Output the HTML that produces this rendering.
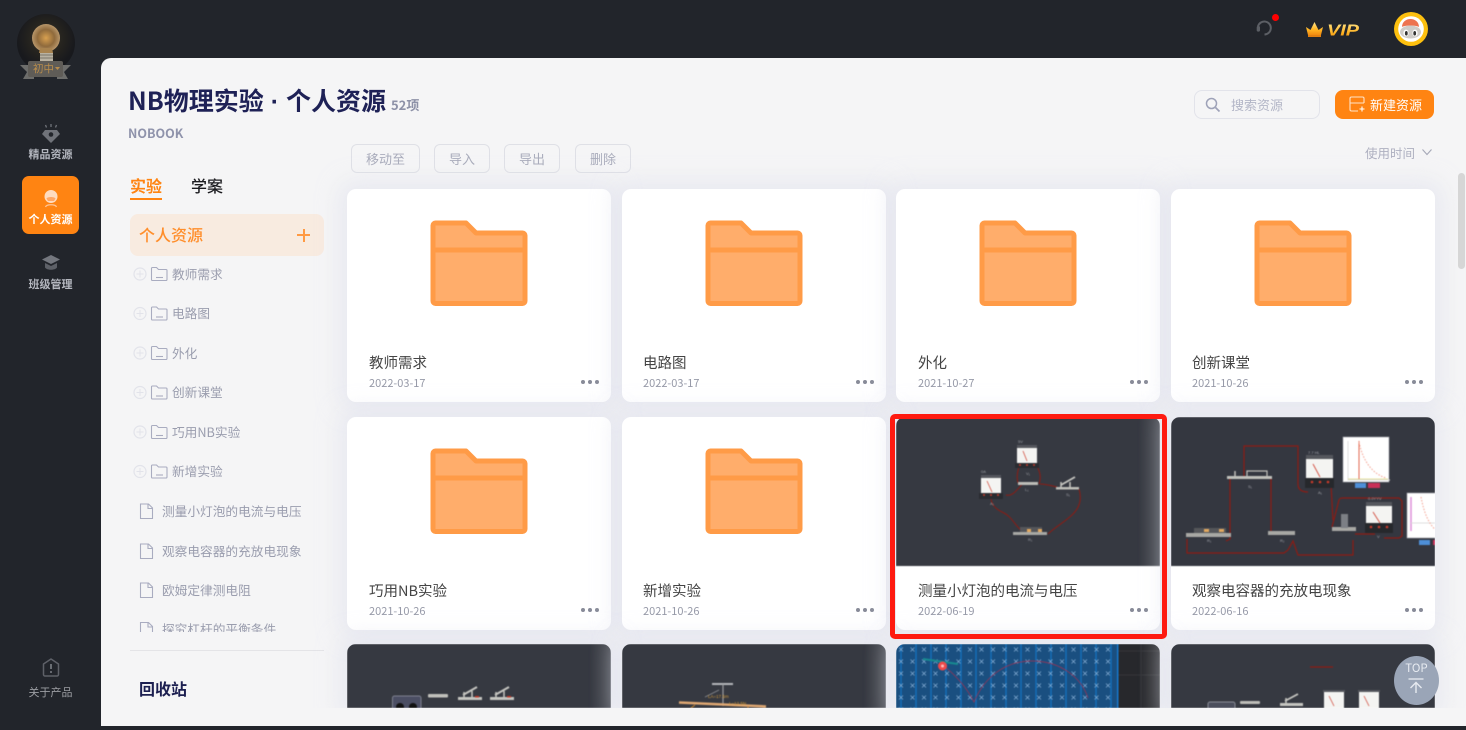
<!DOCTYPE html>
<html lang="zh"><head><meta charset="utf-8"><title>NB物理实验</title>
<style>
*{box-sizing:border-box}
html,body{margin:0;padding:0;width:1466px;height:730px;overflow:hidden;background:#22252b;font-family:"Noto Sans CJK SC","Liberation Sans",sans-serif}
.t{position:absolute;white-space:nowrap;line-height:20px;height:20px}
.a{position:absolute}
#main{position:absolute;left:101px;top:58px;width:1365px;height:668px;background:#f5f5f6;border-top-left-radius:10px;overflow:hidden}
#grid{position:absolute;left:-101px;top:-58px;width:1466px;height:708px;overflow:hidden}
.card{position:absolute;width:264px;height:213px;background:#fff;border-radius:9px;overflow:hidden;box-shadow:0 0 22px 8px rgba(222,224,236,.55)}
.card.r3{height:64px;border-radius:9px 9px 0 0}
.card svg{position:absolute;left:0;top:0}
.card svg.th{filter:blur(.45px)}
.ct{position:absolute;left:22px;top:164px;font-size:14.5px;line-height:20px;color:#444;white-space:nowrap}
.cd{position:absolute;left:22px;top:186px;font-size:11px;line-height:16px;color:#979aa8;white-space:nowrap}
.l2 .ct,.l2 .cd{left:21px}
.dots{position:absolute;left:234px;top:191px;width:18px;height:4px}
.dots i{position:absolute;top:0;width:4px;height:4px;border-radius:50%;background:#888b98}
.dots i:nth-child(1){left:0}.dots i:nth-child(2){left:7px}.dots i:nth-child(3){left:14px}
.sheen{position:absolute;right:0;top:0;width:22px;height:149px;background:linear-gradient(90deg,rgba(255,255,255,0),rgba(255,255,255,.11))}
.r3 .sheen{height:64px}
.btn{position:absolute;top:144px;height:29px;border:1px solid #dfe0e6;border-radius:6px;font-size:13px;line-height:27px;text-align:center;color:#a9acbb}
.tree{font-size:12.7px;color:#9a9dae}
.nav{font-size:11px;font-weight:700;color:#b4b7bf;width:101px;left:0;text-align:center}
</style></head><body>

<!-- sidebar -->
<svg class="a" style="left:10px;top:10px" width="72" height="76" viewBox="0 0 72 76">
<defs><radialGradient id="gl" cx=".5" cy=".42" r=".5"><stop offset="0" stop-color="#4a3c2a"/><stop offset=".55" stop-color="#26241f"/><stop offset="1" stop-color="#18191d"/></radialGradient>
<radialGradient id="bb" cx=".5" cy=".5" r=".55"><stop offset="0" stop-color="#d8a050"/><stop offset=".55" stop-color="#8f6a3c"/><stop offset="1" stop-color="#c2a277"/></radialGradient></defs>
<circle cx="36" cy="33" r="29" fill="url(#gl)"/>
<circle cx="36" cy="28" r="14" fill="url(#bb)"/>
<path d="M30 38h12l1 5H29z" fill="#a8834f"/>
<rect x="30" y="43" width="13" height="8" fill="#b9b2a2"/><path d="M30 45h13M30 48h13" stroke="#7b7569"/>
<path d="M10 55h14v14H13l4-7z" fill="#6d6d6b"/><path d="M61 55H47v14h11l-4-7z" fill="#6d6d6b"/>
<rect x="18" y="51" width="35" height="16" rx="2" fill="#5f5c57"/>
<path d="M45 57h5l-2.500 3z" fill="#b98d4c"/>
<text x="23" y="62" font-size="10.500" fill="#b98d4c" font-family="Noto Sans CJK SC,sans-serif">初中</text>
</svg>

<svg class="a" style="left:40px;top:122px" width="22" height="22" viewBox="0 0 22 22">
<path d="M5 8h12l3 4-9 9-9-9z" fill="#70737a"/><circle cx="11" cy="12.500" r="2.300" fill="#22252b"/>
<path d="M11 2v3M5.500 3l1 2.500M16.500 3l-1 2.500" stroke="#70737a" stroke-width="1.300"/></svg>
<div class="t nav" style="top:144px">精品资源</div>
<div class="a" style="left:22px;top:176px;width:57px;height:58px;border-radius:7px;background:#ff8412"></div>
<svg class="a" style="left:40px;top:188px" width="22" height="22" viewBox="0 0 22 22">
<circle cx="11" cy="8.500" r="6.500" fill="#ffdcc0"/><path d="M6.500 10.500c1-2 8-2 9 0l-1.500 2.500h-6z" fill="#ffa868"/><path d="M5.500 19c1-3 10-3 11 0" fill="none" stroke="#ffc596" stroke-width="1.300"/></svg>
<div class="t nav" style="top:209px;color:#fff">个人资源</div>
<svg class="a" style="left:40px;top:253px" width="22" height="20" viewBox="0 0 22 20">
<path d="M11 2l9 4.500-9 4.500-9-4.500z" fill="#74777e"/><path d="M5 10v4.500c2 3 10 3 12 0V10l-6 3z" fill="#5d6067"/></svg>
<div class="t nav" style="top:274px">班级管理</div>
<svg class="a" style="left:41px;top:657px" width="20" height="21" viewBox="0 0 20 21">
<path d="M10 2l7.500 5v10.500a1.500 1.500 0 0 1-1.500 1.500H4a1.500 1.500 0 0 1-1.500-1.500V7z" fill="none" stroke="#5e6168" stroke-width="1.500" stroke-linejoin="round"/>
<path d="M10 7v5" stroke="#7d8087" stroke-width="1.600"/><circle cx="10" cy="15" r="1" fill="#7d8087"/></svg>
<div class="t" style="left:0;width:101px;text-align:center;top:682px;font-size:11px;color:#9c9ea3">关于产品</div>

<!-- top bar -->
<svg class="a" style="left:1254px;top:17px" width="20" height="21" viewBox="0 0 20 21">
<path d="M4 9.500A6.500 6.500 0 1 1 10.500 17.500" fill="none" stroke="#5c5f65" stroke-width="2"/><rect x="2.700" y="9" width="3.300" height="5.600" rx="1.500" fill="#5c5f65"/></svg>
<div class="a" style="left:1272px;top:14px;width:7px;height:7px;border-radius:50%;background:#f00"></div>
<svg class="a" style="left:1304px;top:20px" width="58" height="18" viewBox="0 0 58 18">
<defs><linearGradient id="cr" x1="0" y1="0" x2="0" y2="1"><stop offset="0" stop-color="#ffe48a"/><stop offset=".6" stop-color="#ffb321"/><stop offset="1" stop-color="#f08a10"/></linearGradient></defs>
<path d="M2 7l4.500 3L10.500 2l4 8L19 7l-2 8H4z" fill="url(#cr)"/><rect x="4" y="15" width="13" height="2" fill="#e07f10"/>
<text x="23" y="15.500" font-size="15.500" font-weight="700" font-style="italic" fill="url(#cr)" font-family="Liberation Sans,sans-serif" textLength="32" lengthAdjust="spacingAndGlyphs">VIP</text></svg>
<svg class="a" style="left:1394px;top:12px" width="34" height="34" viewBox="0 0 34 34">
<circle cx="17" cy="17" r="17" fill="#fdc00f"/><circle cx="17" cy="17" r="12.800" fill="#fff"/>
<ellipse cx="16.500" cy="20" rx="10.500" ry="6.500" fill="#cfccc8"/>
<path d="M8 15c0-5 4-8 8.500-8S25 10 25 15c-3-2-14-2-17 0z" fill="#ed7350"/>
<ellipse cx="12" cy="21" rx="2.600" ry="3.400" fill="#fff"/><ellipse cx="21" cy="21" rx="2.600" ry="3.400" fill="#fff"/>
<ellipse cx="12.300" cy="21.300" rx="1.400" ry="2.300" fill="#333"/><ellipse cx="20.700" cy="21.300" rx="1.400" ry="2.300" fill="#333"/></svg>

<!-- main -->
<div id="main">
<div id="grid">

<div class="t" style="left:128px;top:85px;height:30px;line-height:30px;font-size:25px;font-weight:700;color:#1e2156">NB物理实验<span style="font-family:'Liberation Sans',sans-serif"> · </span>个人资源</div>
<div class="t" style="left:391px;top:95px;font-size:13px;font-weight:700;color:#8e92a8">52项</div>
<div class="t" style="left:128px;top:123px;font-size:12.500px;font-weight:700;color:#8f93ab">NOBOOK</div>

<!-- tabs -->
<div class="t" style="left:130px;top:175px;font-size:16px;font-weight:700;color:#ff8412">实验</div>
<div class="a" style="left:130px;top:198px;width:32px;height:2px;background:#ff8412"></div>
<div class="t" style="left:191px;top:175px;font-size:16px;font-weight:500;color:#1b1b1f">学案</div>
<div class="a" style="left:130px;top:214px;width:194px;height:42px;border-radius:8px;background:#f8ebe0"></div>
<div class="t" style="left:139px;top:224px;font-size:16px;font-weight:500;color:#ff8e2b">个人资源</div>
<div class="a" style="left:297px;top:234px;width:13px;height:2px;background:#ff9a44"></div>
<div class="a" style="left:302.500px;top:229px;width:2px;height:13px;background:#ff9a44"></div>

<!-- tree -->
<div class="a" style="left:130px;top:256px;width:194px;height:376px;overflow:hidden">
<svg class="a" style="left:0;top:0" width="50" height="240" viewBox="0 0 50 240" fill="none">
<defs><g id="fo"><circle cx="10" cy="18" r="6" stroke="#e2e3ea" stroke-width="1.200"/><path d="M6.500 18h7M10 14.500v7" stroke="#e2e3ea" stroke-width="1"/><path d="M21.500 23.500v-11a1 1 0 0 1 1-1h4l2 2h7.500a1 1 0 0 1 1 1v9a1 1 0 0 1-1 1h-13.500a1 1 0 0 1-1-1z" stroke="#a9acc0" stroke-width="1.100"/><path d="M26 21.500h7" stroke="#a9acc0" stroke-width="1.100"/></g></defs>
<use href="#fo"/><use href="#fo" y="39.500"/><use href="#fo" y="79"/><use href="#fo" y="118.500"/><use href="#fo" y="158"/><use href="#fo" y="197.500"/>
</svg>
<svg class="a" style="left:0;top:240px" width="30" height="136" viewBox="0 0 30 136" fill="none">
<defs><path id="fi" d="M10.500 8h8l4 4v10.500h-12zM18 8v4.500h4.500" stroke="#a9acc0" stroke-width="1.100"/></defs>
<use href="#fi"/><use href="#fi" y="40"/><use href="#fi" y="79"/><use href="#fi" y="118.500"/>
</svg>
<div class="t tree" style="left:42px;top:8px">教师需求</div>
<div class="t tree" style="left:42px;top:47px">电路图</div>
<div class="t tree" style="left:42px;top:87px">外化</div>
<div class="t tree" style="left:42px;top:126px">创新课堂</div>
<div class="t tree" style="left:42px;top:166px">巧用NB实验</div>
<div class="t tree" style="left:42px;top:205px">新增实验</div>
<div class="t tree" style="left:32px;top:245px">测量小灯泡的电流与电压</div>
<div class="t tree" style="left:32px;top:285px">观察电容器的充放电现象</div>
<div class="t tree" style="left:32px;top:324px">欧姆定律测电阻</div>
<div class="t tree" style="left:32px;top:356px;height:20px;overflow:hidden;line-height:34px">探究杠杆的平衡条件</div>
</div>
<div class="a" style="left:130px;top:650px;width:194px;height:1px;background:#e4e4e7"></div>
<div class="t" style="left:139px;top:678px;font-size:16px;font-weight:700;color:#1c1f50">回收站</div>

<!-- toolbar -->
<div class="btn" style="left:351px;width:69px">移动至</div>
<div class="btn" style="left:434px;width:56px">导入</div>
<div class="btn" style="left:504px;width:56px">导出</div>
<div class="btn" style="left:575px;width:56px">删除</div>

<div class="a" style="left:1194px;top:90px;width:126px;height:29px;border:1px solid #e2e3ea;border-radius:8px"></div>
<svg class="a" style="left:1205px;top:97px" width="16" height="16" viewBox="0 0 16 16" fill="none"><circle cx="6.500" cy="6.500" r="5" stroke="#9ea2b8" stroke-width="1.500"/><path d="M10.500 10.500l4 4" stroke="#9ea2b8" stroke-width="1.700"/></svg>
<div class="t" style="left:1231px;top:95px;font-size:13px;color:#b3b6c7">搜索资源</div>
<div class="a" style="left:1335px;top:90px;width:99px;height:29px;border-radius:8px;background:#ff8412"></div>
<svg class="a" style="left:1348px;top:96px" width="18" height="17" viewBox="0 0 18 17" fill="none"><path d="M16 7V2.500a1.500 1.500 0 0 0-1.500-1.500h-11A1.500 1.500 0 0 0 2 2.500v11A1.500 1.500 0 0 0 3.500 15H10M2 7h14" stroke="#ffe3c8" stroke-width="1.100"/><path d="M11.500 13h5M14 10.500v5" stroke="#fff" stroke-width="1.100"/></svg>
<div class="t" style="left:1370px;top:95px;font-size:13px;color:#fff">新建资源</div>
<div class="t" style="left:1365px;top:143px;font-size:12.500px;color:#aeb0c0">使用时间</div>
<svg class="a" style="left:1421px;top:148px" width="12" height="9" viewBox="0 0 12 9" fill="none"><path d="M1.500 1.500L6 6.500l4.500-5" stroke="#a6a9b8" stroke-width="1.100"/></svg>

<!-- cards row 1 -->
<div class="card" style="left:347px;top:189px"><svg width="264" height="149"><use href="#fold"/></svg><div class="ct">教师需求</div><div class="cd">2022-03-17</div><div class="dots"><i></i><i></i><i></i></div></div>
<div class="card l2" style="left:622px;top:189px"><svg width="264" height="149"><use href="#fold"/></svg><div class="ct">电路图</div><div class="cd">2022-03-17</div><div class="dots"><i></i><i></i><i></i></div></div>
<div class="card" style="left:896px;top:189px"><svg width="264" height="149"><use href="#fold"/></svg><div class="ct">外化</div><div class="cd">2021-10-27</div><div class="dots"><i></i><i></i><i></i></div></div>
<div class="card l2" style="left:1171px;top:189px"><svg width="264" height="149"><use href="#fold"/></svg><div class="ct">创新课堂</div><div class="cd">2021-10-26</div><div class="dots"><i></i><i></i><i></i></div></div>

<!-- cards row 2 -->
<div class="card" style="left:347px;top:417px"><svg width="264" height="149"><use href="#fold"/></svg><div class="ct">巧用NB实验</div><div class="cd">2021-10-26</div><div class="dots"><i></i><i></i><i></i></div></div>
<div class="card l2" style="left:622px;top:417px"><svg width="264" height="149"><use href="#fold"/></svg><div class="ct">新增实验</div><div class="cd">2021-10-26</div><div class="dots"><i></i><i></i><i></i></div></div>

<div class="card" style="left:896px;top:417px">
<svg class="th" width="264" height="149" viewBox="0 0 264 149"><rect x="-2" y="-2" width="268" height="153" fill="#363941"/>
<g fill="none" stroke="#8c1c14" stroke-width="1"><path d="M95 77c-1 10 4 15 13 19 8 4 12 14 20 20"/><path d="M110 78c8 2 12-8 18-12"/><path d="M125 46c-3 6-5 12-3 20M140 47c3 6 6 12 3 20"/><path d="M144 67c6 0 12 2 17 3"/><path d="M183 72c3 10 1 18-6 25-8 8-18 13-25 20"/></g>
<g><rect x="121" y="30" width="20" height="16" fill="#f4f4f2"/><rect x="121" y="28" width="20" height="3" fill="#55575d"/><rect x="119" y="46" width="24" height="5" fill="#2a2c31"/><circle cx="124" cy="48" r="1" fill="#c83a2a"/><circle cx="131" cy="48" r="1" fill="#c83a2a"/><circle cx="138" cy="48" r="1" fill="#c83a2a"/><path d="M127 34l4 10" stroke="#d04030" stroke-width=".7"/>
<rect x="85" y="60" width="20" height="16" fill="#f4f4f2"/><rect x="85" y="58" width="20" height="3" fill="#55575d"/><rect x="83" y="76" width="24" height="6" fill="#2a2c31"/><circle cx="88" cy="78" r="1" fill="#c83a2a"/><circle cx="95" cy="78" r="1" fill="#c83a2a"/><circle cx="102" cy="78" r="1" fill="#c83a2a"/><path d="M91 64l5 11" stroke="#d04030" stroke-width=".7"/>
<rect x="122" y="65" width="20" height="3" fill="#bdbdb8"/><rect x="160" y="70" width="23" height="2.500" fill="#bdbdb8"/><path d="M165 68l14-8" stroke="#c5c5c0" stroke-width="1.800"/><path d="M165 65v6M174 65v6" stroke="#c5c5c0" stroke-width="1.500"/>
<rect x="117" y="115" width="34" height="3" fill="#a8a8a4"/><rect x="124" y="110" width="22" height="5" fill="#55565a"/><rect x="131" y="112" width="4" height="3" fill="#e2a860"/><rect x="142" y="112" width="4" height="3" fill="#e2a860"/></g>
<g fill="#9c9ea4" font-size="4" font-family="Liberation Sans,sans-serif"><text x="122" y="26">5V</text><text x="85" y="56">0A</text><text x="130" y="58">V₁</text><text x="94" y="88">A₁</text><text x="129" y="74">L₁</text><text x="170" y="79">S₁</text><text x="132" y="124">R₁</text></g></svg>
<div class="sheen"></div>
<div class="ct">测量小灯泡的电流与电压</div><div class="cd">2022-06-19</div><div class="dots"><i></i><i></i><i></i></div></div>

<div class="card l2" style="left:1171px;top:417px">
<svg class="th" width="264" height="149" viewBox="0 0 264 149"><rect x="-2" y="-2" width="268" height="153" fill="#343740"/>
<g fill="none" stroke="#8c1c14" stroke-width="1.200"><path d="M73 60V29h54v38c0 6 4 8 10 8"/><path d="M59 62v60l-4 2"/><path d="M100 62v54"/><path d="M16 122v14h97l4-3 5-9 5 14h55v-15"/><path d="M160 68l2 35"/><path d="M161 110l7-27c1-2 2-2 4-2h56l3 3v35l-3 2h-15"/><path d="M184 117h20"/></g>
<g><rect x="56" y="59" width="45" height="3" fill="#c0c0bb"/><rect x="76" y="54" width="20" height="6" fill="none" stroke="#c0c0bb" stroke-width="1.200"/><path d="M64 54v6" stroke="#c0c0bb" stroke-width="1.500"/>
<rect x="15" y="116" width="45" height="4" fill="#a8a8a4"/><rect x="23" y="111" width="32" height="5" fill="#55565a"/><rect x="33" y="112" width="5" height="3" fill="#e2a860"/><rect x="48" y="112" width="5" height="3" fill="#e2a860"/>
<rect x="97" y="114" width="27" height="4" fill="#a8a8a4"/>
<rect x="135" y="41" width="27" height="20" fill="#f4f4f2"/><rect x="135" y="38" width="27" height="4" fill="#55575d"/><rect x="134" y="61" width="29" height="10" fill="#26282c"/><circle cx="141" cy="65" r="1.300" fill="#c83a2a"/><circle cx="149" cy="65" r="1.300" fill="#c83a2a"/><circle cx="157" cy="65" r="1.300" fill="#c83a2a"/><path d="M142 47l7 13" stroke="#d04030" stroke-width=".8"/>
<rect x="195" y="88" width="26" height="18" fill="#f4f4f2"/><rect x="195" y="85" width="26" height="4" fill="#55575d"/><rect x="194" y="106" width="28" height="10" fill="#26282c"/><circle cx="200" cy="110" r="1.300" fill="#c83a2a"/><circle cx="208" cy="110" r="1.300" fill="#c83a2a"/><circle cx="216" cy="110" r="1.300" fill="#c83a2a"/><path d="M202 95l7 11" stroke="#d04030" stroke-width=".8"/>
<rect x="161" y="110" width="24" height="4" fill="#a8a8a4"/><rect x="170" y="97" width="7" height="14" fill="#7c7f85"/>
<rect x="172" y="20" width="46" height="45" fill="#fff" stroke="#9a9da3" stroke-width=".6"/><path d="M177 24v39h42" fill="none" stroke="#ddd" stroke-width="1"/><path d="M177 62h40" stroke="#e5e2a0"/><path d="M188 62V24" stroke="#e46a50" stroke-width="1"/><path d="M188 25c4 20 14 32 27 36" fill="none" stroke="#f4a090" stroke-width="1" stroke-dasharray="1.500 1.500"/>
<rect x="184" y="66" width="11" height="5" fill="#4e8fd8"/><rect x="197" y="66" width="12" height="5" fill="#c83058"/>
<rect x="236" y="76" width="34" height="45" fill="#fff" stroke="#9a9da3" stroke-width=".6"/><path d="M240 80v34" stroke="#dd8fd8" stroke-width="1.500"/><path d="M240 106h30" stroke="#ddd"/><path d="M250 80c3 16 8 28 16 34" fill="none" stroke="#f4a090" stroke-width="1" stroke-dasharray="1.500 1.500"/>
<rect x="248" y="123" width="11" height="5" fill="#4e8fd8"/><rect x="262" y="123" width="8" height="5" fill="#c83058"/></g>
<g fill="#a0a2a8" font-size="4" font-family="Liberation Sans,sans-serif"><text x="137" y="37">7.7 HL</text><text x="197" y="83">0.0YYV</text><text x="77" y="71">S₁</text><text x="147" y="77">A₁</text><text x="36" y="125">R₁</text><text x="109" y="125">R₂</text><text x="206" y="121">V</text></g></svg>
<div class="ct">观察电容器的充放电现象</div><div class="cd">2022-06-16</div><div class="dots"><i></i><i></i><i></i></div></div>

<!-- cards row 3 -->
<div class="card r3" style="left:347px;top:644px">
<svg class="th" width="264" height="64" viewBox="0 0 264 64"><rect x="-2" y="-2" width="268" height="70" fill="#363941"/>
<rect x="45.500" y="52" width="28.500" height="14" rx="2" fill="#4b4e63" stroke="#7e818f"/><circle cx="53" cy="63" r="4" fill="#111"/><circle cx="66" cy="63" r="4" fill="#111"/>
<rect x="81" y="50" width="20" height="3.500" rx="1" fill="#c0c0bb"/>
<g id="s1"><rect x="111" y="53" width="24" height="3" fill="#c5c5c0"/><path d="M116 51l14-8" stroke="#c5c5c0" stroke-width="2"/><path d="M117 48v6M125 47v7" stroke="#c5c5c0" stroke-width="1.500"/><rect x="128" y="52" width="4" height="1.500" fill="#c83a2a"/></g>
<use href="#s1" x="32"/></svg>
<div class="sheen"></div></div>

<div class="card r3" style="left:622px;top:644px">
<svg class="th" width="264" height="64" viewBox="0 0 264 64"><rect x="-2" y="-2" width="268" height="70" fill="#363941"/>
<path d="M90 40h21" stroke="#b4b6ba" stroke-width="2"/><path d="M101 40v22" stroke="#9a9ca0" stroke-width="1.200"/>
<path d="M57 58.500l87 4" stroke="#dfa873" stroke-width="2.500"/>
<path d="M61 70l12-9M126 62v6" stroke="#d98b2a" stroke-width=".8"/><path d="M83 53l14-7" stroke="#8a8c90" stroke-width=".8"/>
<g fill="#d49a3a" font-size="4.500" font-family="Liberation Sans,sans-serif"><text x="86" y="54">LA=17.5m</text><text x="107" y="61">L=12.5N</text></g></svg>
<div class="sheen"></div></div>

<div class="card r3" style="left:896px;top:644px">
<svg class="th" width="264" height="64" viewBox="0 0 264 64"><defs><pattern id="xp" width="11.500" height="12" patternUnits="userSpaceOnUse"><path d="M3 3.500l4 4M7 3.500l-4 4" stroke="#8fb6dc" stroke-width=".6"/></pattern><pattern id="vl" width="15" height="60" patternUnits="userSpaceOnUse"><path d="M5 0v60" stroke="#1272bf" stroke-width="1.300"/></pattern></defs>
<rect x="-2" y="-2" width="268" height="70" fill="#27282c"/><path d="M222 31h42M222 7h42" stroke="#35363a"/><path d="M245 0v64" stroke="#35363a"/>
<rect width="222" height="66" fill="#1a4f80"/><rect width="222" height="66" fill="url(#vl)"/><rect width="222" height="66" fill="url(#xp)"/><rect x="221" width="1.500" height="66" fill="#1678cc"/>
<path d="M27 15l35 5" stroke="#178a90" stroke-width="2"/><path d="M48 22c10 8 22 20 30 36 10-24 30-41 58-41 30 0 50 18 56 37" fill="none" stroke="#a83050" stroke-width=".7"/><circle cx="46.500" cy="22" r="4.500" fill="#ee4a4a"/><circle cx="46.500" cy="22" r="1.500" fill="#fbb"/></svg>
<div class="sheen"></div></div>

<div class="card r3" style="left:1171px;top:644px">
<svg class="th" width="264" height="64" viewBox="0 0 264 64"><rect x="-2" y="-2" width="268" height="70" fill="#363941"/>
<path d="M139 23h23" stroke="#8c1c14" stroke-width="1.200"/>
<rect x="37" y="58" width="27" height="8" rx="2" fill="#4b4e5c" stroke="#8a8d96"/><rect x="69" y="57" width="20" height="3" rx="1" fill="#bebeb9"/>
<rect x="109" y="59" width="23" height="3" fill="#c5c5c0"/><path d="M114 57l13-7" stroke="#c5c5c0" stroke-width="1.800"/><path d="M115 54v5" stroke="#c5c5c0" stroke-width="1.500"/>
<rect x="153" y="48" width="20" height="18" fill="#f4f4f2"/><rect x="152" y="46" width="22" height="2" fill="#55575d"/><rect x="188" y="48" width="20" height="18" fill="#f4f4f2"/><rect x="187" y="46" width="22" height="2" fill="#55575d"/>
<path d="M158 52l5 10M193 52l5 10" stroke="#d04030" stroke-width=".7"/></svg>
</div>

<!-- highlight -->
<div class="a" style="left:890px;top:414px;width:277px;height:225px;border:5px solid #fe1a10;border-radius:5px"></div>

<!-- top btn -->
<div class="a" style="left:1394px;top:656px;width:45px;height:49px;border-radius:50%;background:#9aa5b7"></div>
<div class="t" style="left:1394px;width:45px;text-align:center;top:658px;font-size:11.500px;color:#e6eaf0">TOP</div>
<svg class="a" style="left:1405px;top:678px" width="22" height="20" viewBox="0 0 22 20" fill="none"><path d="M3.500 1h15" stroke="#e6eaf0" stroke-width="1.300"/><path d="M11 4.500V15M5.500 10L11 4.500 16.500 10" stroke="#e6eaf0" stroke-width="1.400"/></svg>

</div>
</div>

<!-- scrollbar -->
<div class="a" style="left:1458px;top:173px;width:7px;height:96px;border-radius:4px;background:#d6d6d6"></div>

<svg width="0" height="0" style="position:absolute"><defs>
<g id="fold"><path d="M88.500 34H119l10 10h46.500a2.500 2.500 0 0 1 2.500 2.500V112a2.500 2.500 0 0 1-2.500 2.500h-87A2.500 2.500 0 0 1 86 112V36.500A2.500 2.500 0 0 1 88.500 34z" fill="#ffad6b" stroke="#ff9b47" stroke-width="5" stroke-linejoin="round"/><path d="M86 61h92" stroke="#ff9b47" stroke-width="5"/></g>
</defs></svg>
</body></html>
